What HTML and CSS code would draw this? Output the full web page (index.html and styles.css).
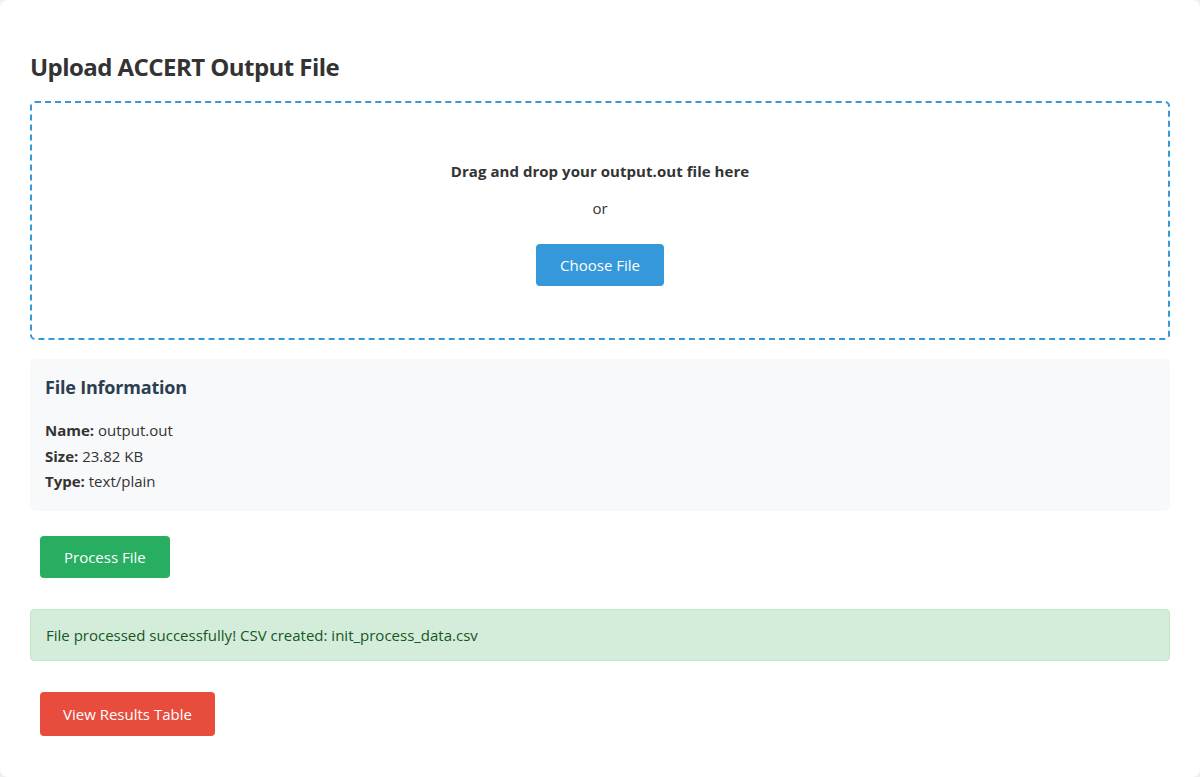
FILE: index.html
```html
<!DOCTYPE html>
<html lang="en">
<head>
<meta charset="utf-8">
<title>Upload ACCERT Output File</title>
<link rel="stylesheet" href="styles.css">
</head>
<body>
<div class="card">
  <h2 class="title">Upload ACCERT Output File</h2>
  <div class="dropzone">
    <p class="drop-text">Drag and drop your output.out file here</p>
    <p class="or">or</p>
    <button class="btn btn-blue">Choose File</button>
  </div>
  <div class="info">
    <h3 class="info-title">File Information</h3>
    <p class="info-line"><strong>Name:</strong> output.out</p>
    <p class="info-line"><strong>Size:</strong> 23.82 KB</p>
    <p class="info-line"><strong>Type:</strong> text/plain</p>
  </div>
  <button class="btn btn-green">Process File</button>
  <div class="success">File processed successfully! CSV created: init_process_data.csv</div>
  <button class="btn btn-red">View Results Table</button>
</div>
</body>
</html>
```
FILE: styles.css
```css
html, body {
  margin: 0;
  padding: 0;
}
body {
  background: #eef0f2;
  font-family: "Open Sans", "Noto Sans", sans-serif;
  color: #333;
  line-height: 1.6;
  font-size: 16px;
}
.card {
  background: #fff;
  border-radius: 8px;
  padding: 30px;
  min-height: 777px;
  box-sizing: border-box;
}
.title {
  font-size: 24px;
  font-weight: 700;
  color: #333;
  margin: 18px 0 15px;
  line-height: 38px;
  letter-spacing: -0.55px;
}
.dropzone {
  border: 2px dashed #3498db;
  border-radius: 5px;
  padding: 40px 20px;
  text-align: center;
}
.drop-text {
  margin: 16px 0 0;
  font-weight: 700;
  font-size: 15px;
  letter-spacing: 0.05px;
}
.or {
  margin: 13px 0 0;
  font-size: 15px;
}
.btn {
  font-family: inherit;
  font-size: 15px;
  line-height: 22px;
  color: #fff;
  border: none;
  border-radius: 4px;
  padding: 10px 24px;
  margin: 10px;
  cursor: pointer;
}
.btn-blue {
  background: #3498db;
  margin: 24px 0 12px;
}
.btn-green {
  background: #27ae60;
  display: block;
  margin: 25px 10px 0;
}
.btn-red {
  background: #e74c3c;
  display: block;
  padding: 11px 23px;
  margin: 31px 10px 0;
}
.info {
  background: #f8f9fa;
  border-radius: 5px;
  padding: 16px 15px;
  margin-top: 19px;
}
.info-title {
  font-size: 18px;
  color: #2c3e50;
  margin: 0 0 18px;
  line-height: 25px;
  letter-spacing: -0.2px;
}
.info-line {
  margin: 0;
  font-size: 15px;
  line-height: 25.6px;
}
.success {
  margin-top: 31px;
  background: #d4edda;
  border: 1px solid #c3e6cb;
  color: #155724;
  border-radius: 4px;
  padding: 12px 15px;
  font-size: 15px;
  line-height: 26px;
}
```
